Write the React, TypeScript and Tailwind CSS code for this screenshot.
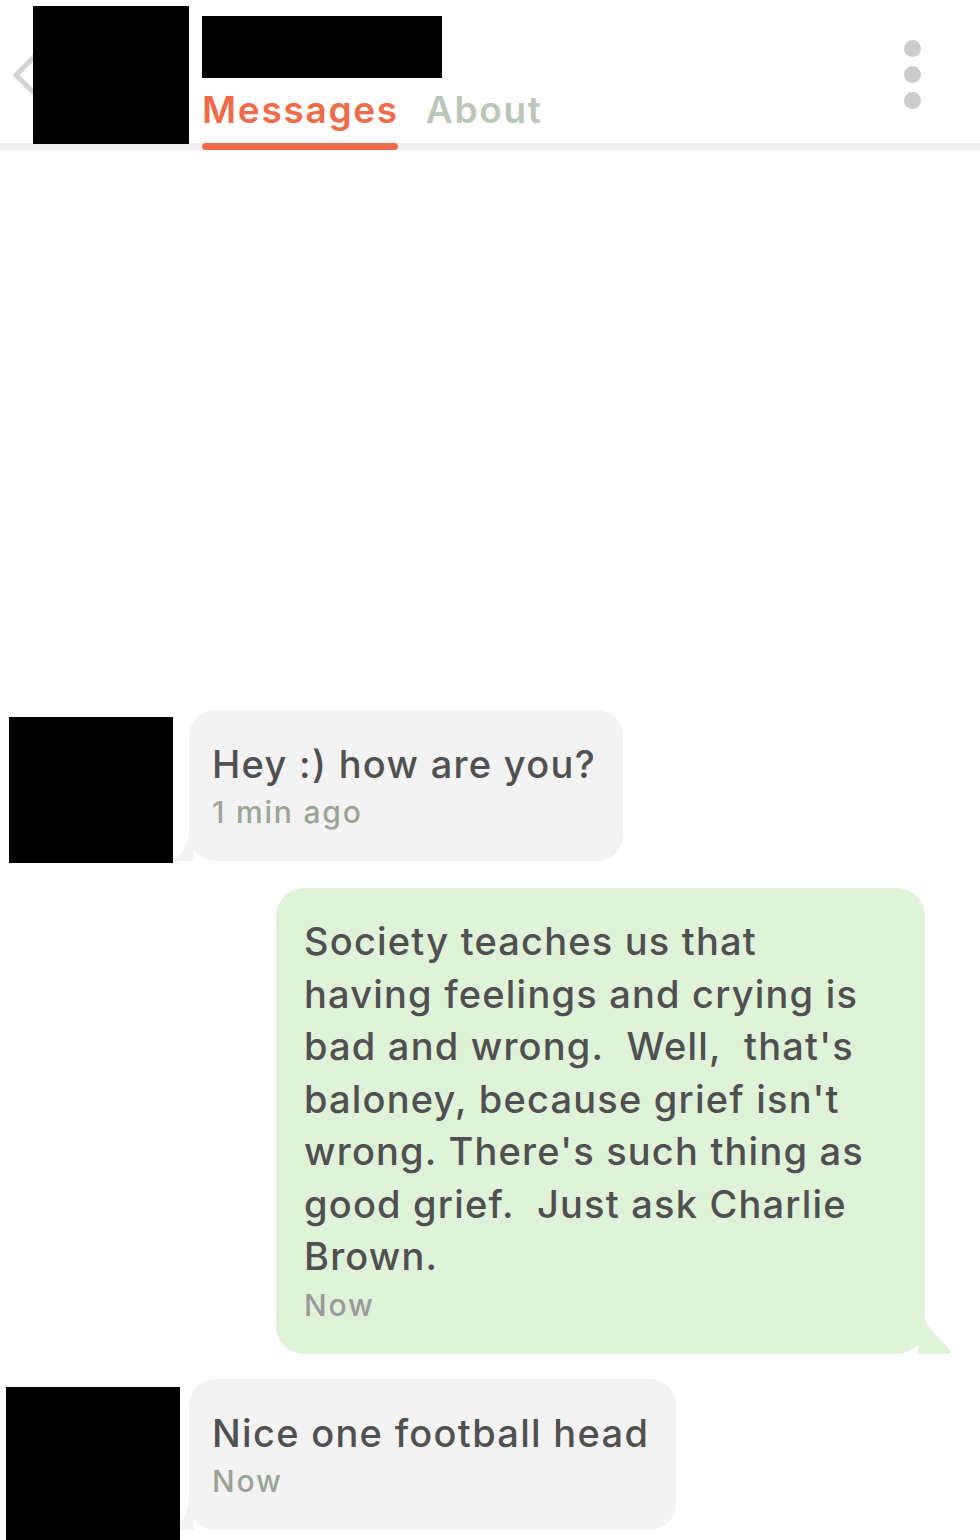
import React from 'react';

type Msg = {
  id: string;
  text: string;
  time: string;
};

const messages: Msg[] = [
  { id: 'm1', text: 'Hey :) how are you?', time: '1 min ago' },
  {
    id: 'm2',
    text:
      "Society teaches us that\nhaving feelings and crying is\nbad and wrong.  Well,  that's\nbaloney, because grief isn't\nwrong. There's such thing as\ngood grief.  Just ask Charlie\nBrown.",
    time: 'Now',
  },
  { id: 'm3', text: 'Nice one football head', time: 'Now' },
];

const font = { fontFamily: 'Inter, "Open Sans", sans-serif' };

function Header() {
  return (
    <div className="relative h-[150px]">
      <div className="flex items-start">
        {/* back chevron, mostly hidden under the avatar */}
        <svg className="mt-[54px] ml-[12px] h-[42px] w-[26px]" viewBox="0 0 26 42" fill="none">
          <path d="M22 3 L4 21 L22 39" stroke="#d3d3d3" strokeWidth="5" strokeLinecap="round" strokeLinejoin="round" />
        </svg>
        <div className="relative z-10 mt-[6px] -ml-[5px] h-[138px] w-[156px] bg-black" />
        <div className="ml-[13px] flex flex-col">
          <div className="mt-[16px] h-[62px] w-[240px] bg-black" />
          <div className="mt-[9px] flex items-end gap-[27px] text-[37px] font-semibold leading-[46px] tracking-[1.7px]">
            <span className="text-[#ef6b4a]">Messages</span>
            <span className="text-[#bac6b8]">About</span>
          </div>
        </div>
        <div className="ml-auto mr-[59px] mt-[40px] flex flex-col gap-[9px]">
          <div className="h-[17px] w-[17px] rounded-full bg-[#cccccc]" />
          <div className="h-[17px] w-[17px] rounded-full bg-[#cccccc]" />
          <div className="h-[17px] w-[17px] rounded-full bg-[#cccccc]" />
        </div>
      </div>
      <div className="absolute bottom-0 left-0 right-0 h-[7px] bg-[#efefef]" />
      <div className="absolute bottom-0 left-[202px] h-[7px] w-[196px] rounded-full bg-[#ef6b4a]" />
    </div>
  );
}

function TheirBubble({ msg }: { msg: Msg }) {
  return (
    <div className="relative">
      <svg className="absolute bottom-0 -left-[15px] h-[32px] w-[20px]" viewBox="0 0 20 32">
        <path d="M15 0 L20 0 L20 32 L2 32 Q0 32 1 30 Q15 18 15 0 Z" fill="#f3f3f3" />
      </svg>
      <div className="relative rounded-[26px] bg-[#f3f3f3] pl-[23px] pr-[27px] pt-[28px] pb-[27px]">
        <div className="whitespace-pre-wrap text-[38px] font-medium leading-[52px] tracking-[1.3px] text-[#505050]">{msg.text}</div>
        <div className="text-[30px] font-medium leading-[44px] tracking-[1.8px] text-[#9ba596]">{msg.time}</div>
      </div>
    </div>
  );
}

function MyBubble({ msg }: { msg: Msg }) {
  return (
    <div className="flex justify-end pr-[55px]">
      <div className="relative w-[649px]">
        <svg className="absolute bottom-0 -right-[27px] h-[36px] w-[34px]" viewBox="0 0 34 36">
          <path d="M0 0 L7 0 Q7 4 10 8 L32 32 Q34 36 30 36 L0 36 Z" fill="#dff3d8" />
        </svg>
        <div className="relative rounded-[28px] bg-[#dff3d8] pl-[28px] pr-[20px] pt-[27px] pb-[27px]">
          <div className="whitespace-pre-wrap text-[38px] font-medium leading-[52.5px] tracking-[1.2px] text-[#505050]">{msg.text}</div>
          <div className="text-[30px] font-medium leading-[44px] tracking-[1.8px] text-[#9a9a9a]">{msg.time}</div>
        </div>
      </div>
    </div>
  );
}

export default function App() {
  return (
    <div className="h-[1540px] w-[980px] overflow-hidden bg-white" style={font}>
      <Header />
      <div className="flex flex-col pt-[560px]">
        <div className="flex">
          <div className="relative z-10 mt-[7px] ml-[9px] h-[146px] w-[164px] bg-black" />
          <div className="ml-[16px]">
            <TheirBubble msg={messages[0]} />
          </div>
        </div>
        <div className="mt-[25px]">
          <MyBubble msg={messages[1]} />
        </div>
        <div className="mt-[25px] flex">
          <div className="relative z-10 mt-[8px] ml-[6px] h-[160px] w-[174px] bg-black" />
          <div className="ml-[9px]">
            <TheirBubble msg={messages[2]} />
          </div>
        </div>
      </div>
    </div>
  );
}
